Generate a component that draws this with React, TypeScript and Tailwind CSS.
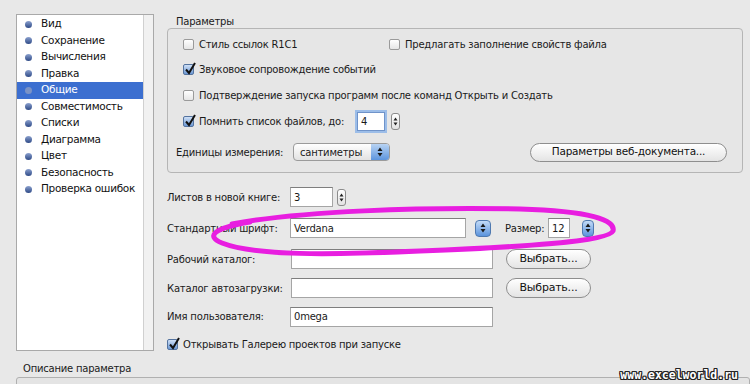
import clsx from 'clsx';

const categories = [
  'Вид',
  'Сохранение',
  'Вычисления',
  'Правка',
  'Общие',
  'Совместимость',
  'Списки',
  'Диаграмма',
  'Цвет',
  'Безопасность',
  'Проверка ошибок',
];

export default function App() {
  return (
    <div className="relative h-[384px] w-[750px] overflow-hidden bg-[#e8e8e8] font-['DejaVu_Sans',sans-serif] text-[10px] tracking-[-0.22px] text-[#1a1a1a]">
      <div className="flex pl-[16px] pt-[14px]">
        {/* categories list */}
        <div className="flex h-[337px] w-[138px] border border-[#a9a9a9] bg-white">
          <div className="flex-1 pt-[1px]">
            {categories.map((name) => (
              <div
                key={name}
                className={clsx(
                  'flex h-[16.5px] items-center gap-[9px] pl-[8px] text-[10.5px] tracking-[-0.3px]',
                  name === 'Общие' ? 'bg-[#3c6fd0] text-white' : 'text-[#111]',
                )}
              >
                <span
                  className={clsx(
                    'h-[7px] w-[7px] rounded-full',
                    name === 'Общие' ? 'bg-[#7b93c6]' : 'bg-gradient-to-b from-[#8da2cf] to-[#2f4a86]',
                  )}
                />
                {name}
              </div>
            ))}
          </div>
          <div className="w-[10px] border-l border-[#d0d0d0] bg-[#f1f1f1]" />
        </div>

        {/* settings */}
        <div className="ml-[13px] flex w-[576px] flex-col">
          <div className="flex h-[14px] items-center pl-[9px]">Параметры</div>
          <div className="flex h-[145px] flex-col rounded-[4px] border border-[#b5b5b5] bg-[#e6e6e6] pl-[15px] pt-[2px]">
            <div className="flex h-[26px] items-center">
              <label className="flex w-[206px] items-center gap-[5px]">
                <Check />
                Стиль ссылок R1C1
              </label>
              <label className="flex items-center gap-[5px]">
                <Check />
                Предлагать заполнение свойств файла
              </label>
            </div>
            <label className="flex h-[25px] items-center gap-[5px]">
              <Check checked />
              Звуковое сопровождение событий
            </label>
            <label className="flex h-[26px] items-center gap-[5px]">
              <Check />
              Подтверждение запуска программ после команд Открыть и Создать
            </label>
            <div className="flex h-[27px] items-center">
              <label className="flex w-[174px] items-center gap-[5px]">
                <Check checked />
                Помнить список файлов, до:
              </label>
              <div className="flex h-[19px] w-[28px] items-center border border-[#6f93c9] bg-white pl-[3px] shadow-[0_0_0_2px_#9cbde8]">4</div>
              <span className="ml-[6px]">
                <Spinner />
              </span>
            </div>
            <div className="-ml-[7px] flex h-[34px] items-center">
              <span className="w-[117px]">Единицы измерения:</span>
              <div className="flex h-[18px] w-[97px] overflow-hidden rounded-[4px] border border-[#9b9b9b] bg-gradient-to-b from-white to-[#e2e2e2]">
                <span className="flex flex-1 items-center pl-[6px]">сантиметры</span>
                <span className="flex w-[18px] items-center justify-center bg-gradient-to-b from-[#b8d3f3] to-[#5d95dd]">
                  <Arrows />
                </span>
              </div>
              <button className="ml-[140px] flex h-[19px] w-[197px] items-center justify-center rounded-full border border-[#8e8e8e] bg-gradient-to-b from-white to-[#e4e4e4] text-[10.5px] text-[#111]">
                Параметры веб-документа...
              </button>
            </div>
          </div>

          <div className="mt-[14px] flex h-[20px] items-center">
            <span className="w-[123px]">Листов в новой книге:</span>
            <Input className="w-[43px]">3</Input>
            <span className="ml-[4px]">
              <Spinner />
            </span>
          </div>
          <div className="mt-[11px] flex h-[20px] items-center">
            <span className="w-[123px]">Стандартный шрифт:</span>
            <Input className="w-[176px]">Verdana</Input>
            <span className="ml-[9px]">
              <BlueSpinner />
            </span>
            <span className="ml-[14px] w-[43px]">Размер:</span>
            <Input className="w-[22px]">12</Input>
            <span className="ml-[12px]">
              <BlueSpinner narrow />
            </span>
          </div>
          <div className="mt-[11px] flex h-[20px] items-center">
            <span className="w-[124px]">Рабочий каталог:</span>
            <Input className="w-[202px]" />
            <PillButton>Выбрать...</PillButton>
          </div>
          <div className="mt-[9px] flex h-[20px] items-center">
            <span className="w-[124px]">Каталог автозагрузки:</span>
            <Input className="w-[202px]" />
            <PillButton>Выбрать...</PillButton>
          </div>
          <div className="mt-[10px] flex h-[17px] items-center">
            <span className="w-[123px]">Имя пользователя:</span>
            <Input className="h-[17px] w-[203px]">0mega</Input>
          </div>
          <label className="mt-[11px] flex h-[16px] items-center gap-[5px]">
            <Check checked />
            Открывать Галерею проектов при запуске
          </label>
        </div>
      </div>

      <div className="mt-[9px] pl-[23px]">Описание параметра</div>
      <div className="ml-[16px] mt-[1px] h-[20px] rounded-t-[3px] border border-[#b0b0b0] bg-[#e4e4e4]" />

      {/* annotation */}
      <svg className="pointer-events-none absolute left-0 top-0" width="750" height="384" viewBox="0 0 750 384">
        <path
          d="M232 224 C 300 211, 420 207, 520 209 C 590 211, 616 220, 613 231 C 608 242, 520 247, 420 251 C 330 255, 255 256, 222 243 C 205 236, 214 228, 250 222"
          fill="none"
          stroke="#e81ee0"
          strokeWidth="5"
          strokeLinecap="round"
        />
      </svg>

      <div className="absolute bottom-[3px] right-[12px] font-['DejaVu_Sans_Mono',monospace] text-[11.5px] font-bold leading-none tracking-normal text-white [text-shadow:1px_0_0_#222,-1px_0_0_#222,0_1px_0_#222,0_-1px_0_#222,1px_1px_0_#222,-1px_-1px_0_#222,1px_-1px_0_#222,-1px_1px_0_#222]">
        www.excelworld.ru
      </div>
    </div>
  );
}

function Check({ checked }: { checked?: boolean }) {
  return (
    <span
      className={clsx(
        'relative inline-block h-[11px] w-[11px] shrink-0 rounded-[2px] border',
        checked
          ? 'border-[#54739f] bg-gradient-to-b from-[#cfe0f6] to-[#6c98d4]'
          : 'border-[#9a9a9a] bg-gradient-to-b from-white to-[#e6e6e6]',
      )}
    >
      {checked && (
        <svg className="absolute -top-[3px] left-[0px]" width="12" height="13" viewBox="0 0 12 13">
          <path d="M2 7.5 L5 11 L11 1" fill="none" stroke="#111" strokeWidth="2" />
        </svg>
      )}
    </span>
  );
}

function Arrows() {
  return (
    <svg width="6" height="10" viewBox="0 0 6 10">
      <path d="M3 0.5 L5.5 4 L0.5 4 Z M0.5 6 L5.5 6 L3 9.5 Z" fill="#1a1a1a" />
    </svg>
  );
}

function Spinner() {
  return (
    <span className="flex h-[17px] w-[9px] items-center justify-center rounded-[3px] border border-[#8c8c8c] bg-gradient-to-b from-white to-[#e2e2e2]">
      <svg width="5" height="9" viewBox="0 0 5 9">
        <path d="M2.5 0.5 L4.5 3.5 L0.5 3.5 Z M0.5 5.5 L4.5 5.5 L2.5 8.5 Z" fill="#222" />
      </svg>
    </span>
  );
}

function BlueSpinner({ narrow }: { narrow?: boolean }) {
  return (
    <span
      className={clsx(
        'flex h-[17px] items-center justify-center rounded-[4px] border border-[#4f79b0] bg-gradient-to-b from-[#c3dbf7] to-[#5b93dc]',
        narrow ? 'w-[12px]' : 'w-[16px]',
      )}
    >
      <Arrows />
    </span>
  );
}

function Input({ className, children }: { className?: string; children?: React.ReactNode }) {
  return (
    <div
      className={clsx(
        'flex h-[20px] items-center border border-[#a5a5a5] border-t-[#7e7e7e] bg-white pl-[3px] text-[10px]',
        className,
      )}
    >
      {children}
    </div>
  );
}

function PillButton({ children }: { children: React.ReactNode }) {
  return (
    <button className="ml-[13px] flex h-[20px] w-[85px] items-center justify-center rounded-full border border-[#8e8e8e] bg-gradient-to-b from-white to-[#e4e4e4] text-[11px] text-[#111]">
      {children}
    </button>
  );
}
